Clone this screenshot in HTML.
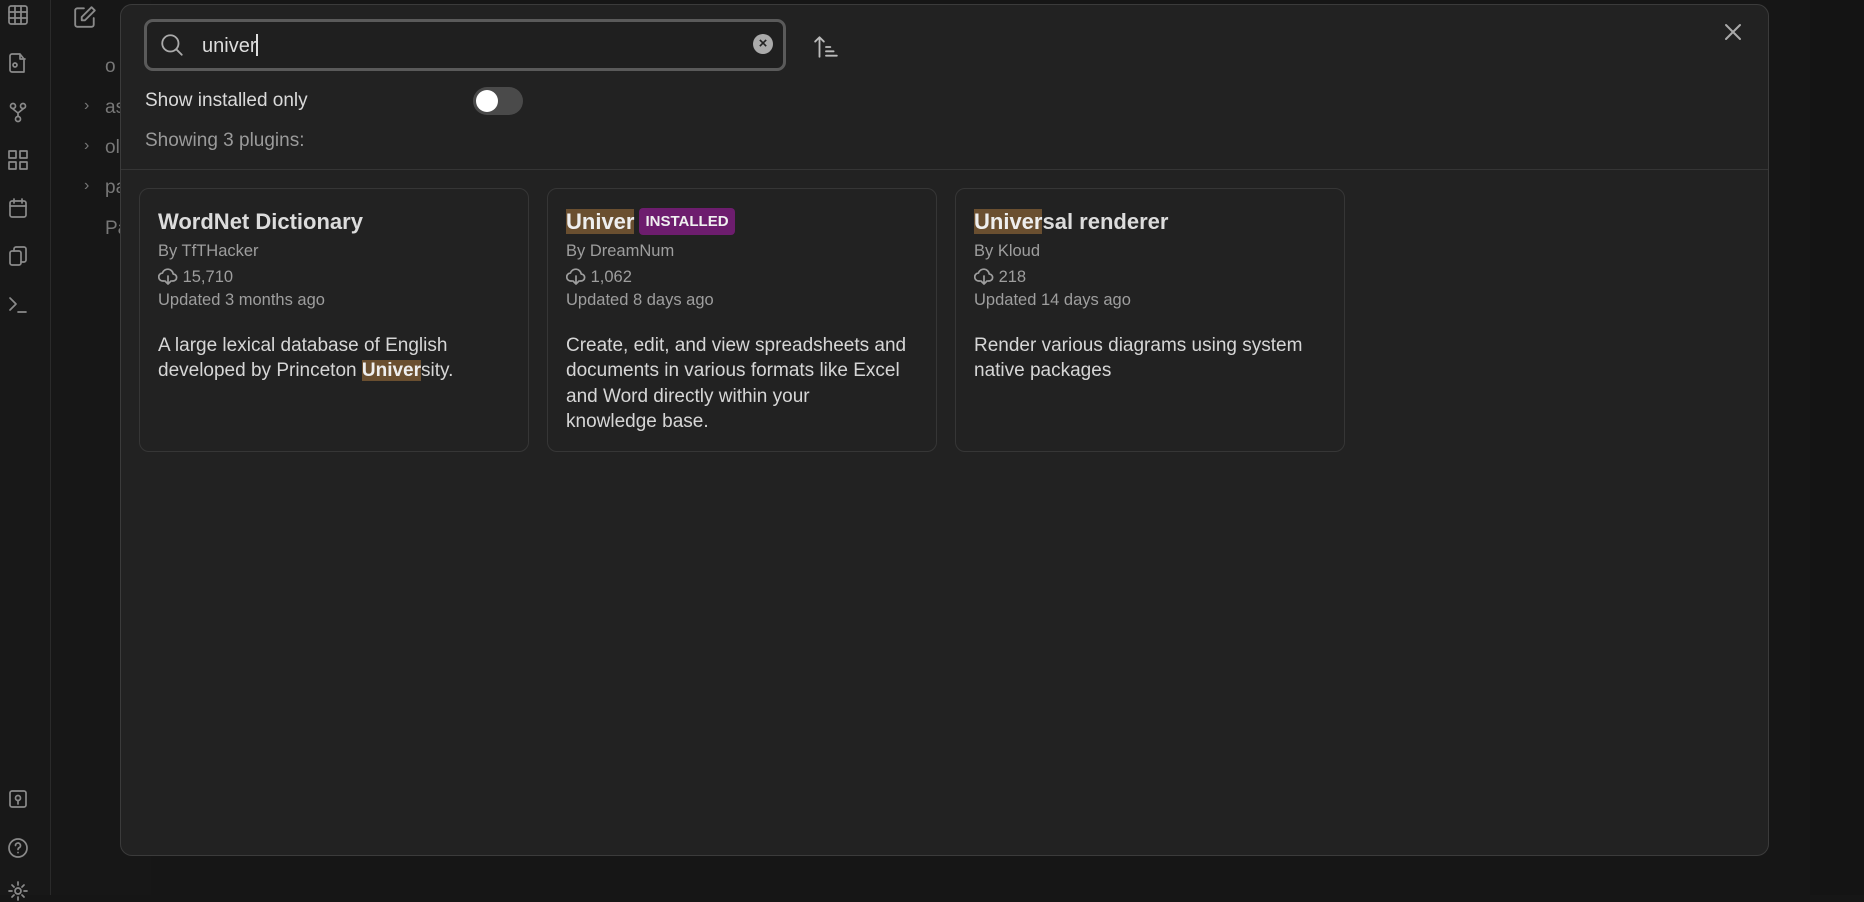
<!DOCTYPE html>
<html><head><meta charset="utf-8"><style>
*{box-sizing:border-box;margin:0;padding:0}
body{width:1864px;height:895px;background:#161616;font-family:"Liberation Sans",sans-serif;position:relative;overflow:hidden;color:#dadada}
.rib{position:absolute;left:0;top:0;width:51px;height:895px;background:#181818;border-right:1px solid #2a2a2a}
.side{position:absolute;left:51px;top:0;width:100px;height:895px;background:#171717}
.ic{position:absolute;left:7px;width:22px;height:22px}
.st{position:absolute;color:#777;font-size:19px}
.modal{position:absolute;left:120px;top:4px;width:1649px;height:852px;background:#222;border:1px solid #3b3b3b;border-radius:12px}
.search{position:absolute;left:23px;top:14px;width:642px;height:52px;border:3px solid #5a5a5a;border-radius:9px;background:#1f1f1f}
.card{position:absolute;top:183px;width:390px;height:264px;border:1px solid #363636;border-radius:10px;background:#222}
.t{position:absolute;left:18px;top:20px;font-size:22px;font-weight:bold;color:#dcdcdc;white-space:nowrap}
.m{position:absolute;left:18px;font-size:16.5px;color:#9e9e9e;white-space:nowrap}
.d{position:absolute;left:18px;top:144px;font-size:19px;line-height:25.3px;color:#d6d6d6;width:355px}
.hl{background:#6a4f30;color:#eee;font-weight:bold}
.badge{display:inline-block;background:#6d1d6e;color:#f0f0f0;font-size:15px;font-weight:bold;padding:5px 6px;border-radius:4px;vertical-align:3px;margin-left:5px}
svg{stroke:#8a8a8a;fill:none;stroke-width:1.7;stroke-linecap:round;stroke-linejoin:round}
</style></head><body>
<div class="rib">
<svg class="ic" style="top:4px" viewBox="0 0 22 22"><rect x="2" y="2" width="18" height="18" rx="2"/><path d="M2 8h18M2 14h18M8 2v18M14 2v18"/></svg>
<svg class="ic" style="top:52px" viewBox="0 0 22 22"><path d="M13 2H5a2 2 0 0 0-2 2v14a2 2 0 0 0 2 2h12V7z M13 2v5h5"/><circle cx="8" cy="13" r="2"/></svg>
<svg class="ic" style="top:101px" viewBox="0 0 22 22"><circle cx="6" cy="5" r="2.5"/><circle cx="16" cy="5" r="2.5"/><circle cx="11" cy="18" r="2.5"/><path d="M6 8l5 4 5-4M11 12v3"/></svg>
<svg class="ic" style="top:149px" viewBox="0 0 22 22"><rect x="2" y="2" width="7" height="7"/><rect x="13" y="2" width="7" height="7"/><rect x="2" y="13" width="7" height="7"/><rect x="13" y="13" width="7" height="7"/></svg>
<svg class="ic" style="top:197px" viewBox="0 0 22 22"><rect x="3" y="4" width="16" height="16" rx="2"/><path d="M3 9h16M7 2v4M15 2v4"/></svg>
<svg class="ic" style="top:245px" viewBox="0 0 22 22"><rect x="3" y="6" width="11" height="14" rx="2"/><path d="M7 6V4a2 2 0 0 1 2-2h8a2 2 0 0 1 2 2v11a2 2 0 0 1-2 2h-3"/></svg>
<svg class="ic" style="top:293px" viewBox="0 0 22 22"><path d="M3 5l6 6-6 6M11 19h8"/></svg>
<svg class="ic" style="top:788px" viewBox="0 0 22 22"><rect x="3" y="3" width="16" height="16" rx="2"/><circle cx="11" cy="10" r="2.5"/><path d="M11 12.5V16"/></svg>
<svg class="ic" style="top:837px" viewBox="0 0 22 22"><circle cx="11" cy="11" r="9"/><path d="M8.5 8.5a2.5 2.5 0 1 1 3.5 2.3c-.7.4-1 1-1 1.7M11 15.5v.1"/></svg>
<svg class="ic" style="top:880px" viewBox="0 0 22 22"><circle cx="11" cy="11" r="3"/><path d="M11 2v3M11 17v3M2 11h3M17 11h3M5 5l2 2M15 15l2 2M5 17l2-2M15 7l2-2"/></svg>
</div>
<div class="side">
<svg style="position:absolute;left:22px;top:5px;width:24px;height:24px" viewBox="0 0 22 22"><path d="M10 3H4a2 2 0 0 0-2 2v13a2 2 0 0 0 2 2h13a2 2 0 0 0 2-2v-6"/><path d="M17 2l3 3-9 9H8v-3z"/></svg>
<div class="st" style="left:54px;top:56px">o</div>
<div class="st" style="left:33px;top:97px;font-size:16px">›</div><div class="st" style="left:54px;top:97px">as</div>
<div class="st" style="left:33px;top:137px;font-size:16px">›</div><div class="st" style="left:54px;top:137px">ol</div>
<div class="st" style="left:33px;top:177px;font-size:16px">›</div><div class="st" style="left:54px;top:177px">pa</div>
<div class="st" style="left:54px;top:218px">Pa</div>
</div>
<div class="modal">
<div class="search">
<svg style="position:absolute;left:12px;top:10px;width:26px;height:26px;stroke:#aaa" viewBox="0 0 24 24"><circle cx="10.5" cy="10.5" r="7.5"/><path d="M16 16l5 5"/></svg>
<div style="position:absolute;left:55px;top:12px;font-size:20px;color:#ddd">univer<span style="display:inline-block;width:2px;height:22px;background:#ddd;vertical-align:-4px"></span></div>
<div style="position:absolute;right:10px;top:12px;width:20px;height:20px;border-radius:50%;background:#aaa;color:#222;font-size:15px;font-weight:bold;text-align:center;line-height:20px">×</div>
</div>
<svg style="position:absolute;left:692px;top:29px;width:26px;height:26px;stroke:#bbb" viewBox="0 0 24 24"><path d="M6 21V3M2 7l4-4 4 4M12 12h4M12 16h7M12 20h10"/></svg>
<svg style="position:absolute;left:1602px;top:17px;width:20px;height:20px;stroke:#aaa;stroke-width:2" viewBox="0 0 20 20"><path d="M3 3l14 14M17 3L3 17"/></svg>
<div style="position:absolute;left:24px;top:85px;font-size:19px;color:#dadada">Show installed only</div>
<div style="position:absolute;left:352px;top:82px;width:50px;height:28px;border-radius:14px;background:#4a4a4a"><div style="position:absolute;left:3px;top:3px;width:22px;height:22px;border-radius:50%;background:#fff"></div></div>
<div style="position:absolute;left:24px;top:125px;font-size:19px;color:#9a9a9a">Showing 3 plugins:</div>
<div style="position:absolute;left:0;right:0;top:164px;height:1px;background:#353535"></div>

<div class="card" style="left:18px">
<div class="t">WordNet Dictionary</div>
<div class="m" style="top:53px">By TfTHacker</div>
<div class="m" style="top:77px"><svg style="width:20px;height:20px;vertical-align:-4px;stroke:#9e9e9e" viewBox="0 0 20 20"><path d="M6 15H5a4 4 0 0 1-.5-8 5.5 5.5 0 0 1 10.7 1A3.5 3.5 0 0 1 15 15h-1M10 10v8M7 15l3 3 3-3"/></svg> 15,710</div>
<div class="m" style="top:102px">Updated 3 months ago</div>
<div class="d">A large lexical database of English developed by Princeton <span class="hl">Univer</span>sity.</div>
</div>
<div class="card" style="left:426px">
<div class="t" style="top:19px"><span class="hl">Univer</span><span class="badge">INSTALLED</span></div>
<div class="m" style="top:53px">By DreamNum</div>
<div class="m" style="top:77px"><svg style="width:20px;height:20px;vertical-align:-4px;stroke:#9e9e9e" viewBox="0 0 20 20"><path d="M6 15H5a4 4 0 0 1-.5-8 5.5 5.5 0 0 1 10.7 1A3.5 3.5 0 0 1 15 15h-1M10 10v8M7 15l3 3 3-3"/></svg> 1,062</div>
<div class="m" style="top:102px">Updated 8 days ago</div>
<div class="d">Create, edit, and view spreadsheets and documents in various formats like Excel and Word directly within your<br>knowledge base.</div>
</div>
<div class="card" style="left:834px">
<div class="t"><span class="hl">Univer</span>sal renderer</div>
<div class="m" style="top:53px">By Kloud</div>
<div class="m" style="top:77px"><svg style="width:20px;height:20px;vertical-align:-4px;stroke:#9e9e9e" viewBox="0 0 20 20"><path d="M6 15H5a4 4 0 0 1-.5-8 5.5 5.5 0 0 1 10.7 1A3.5 3.5 0 0 1 15 15h-1M10 10v8M7 15l3 3 3-3"/></svg> 218</div>
<div class="m" style="top:102px">Updated 14 days ago</div>
<div class="d">Render various diagrams using system native packages</div>
</div>
</div>
<div style="position:absolute;left:1810px;top:0;width:54px;height:895px;background:#141414"></div>
</body></html>
